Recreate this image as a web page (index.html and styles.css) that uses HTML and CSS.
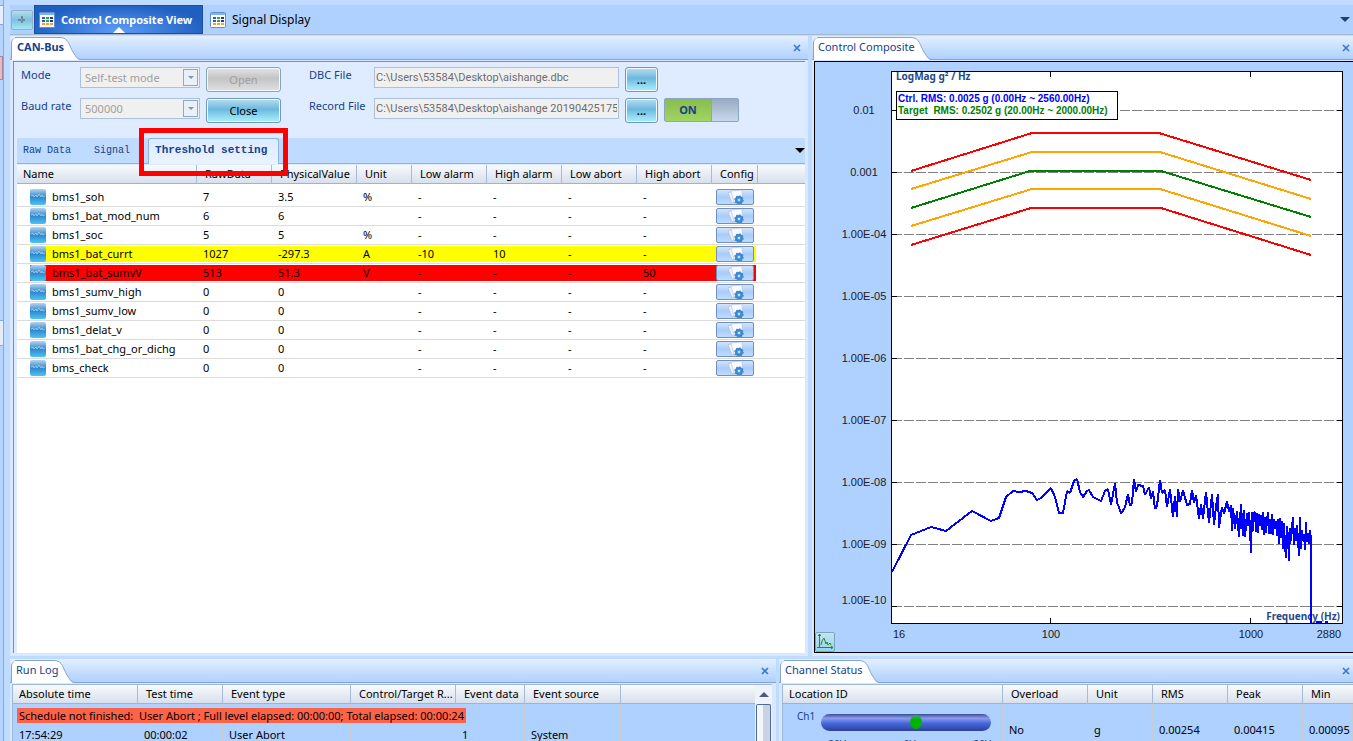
FILE: index.html
```
<!DOCTYPE html>
<html lang="en">
<head>
    <meta charset="UTF-8">
    <meta name="viewport" content="width=device-width, initial-scale=1.0">
    <title>Control Composite View</title>

    <link rel="stylesheet" href="styles.css">
</head>
<body>

    <!-- shared icons -->
    <svg class="sprites" aria-hidden="true">
        <defs>
            <linearGradient id="waveFill" x1="0" y1="0" x2="0" y2="1">
                <stop offset="0" stop-color="#b4d4ee"/>
                <stop offset="0.5" stop-color="#2f86cc"/>
                <stop offset="1" stop-color="#4cc4f4"/>
            </linearGradient>
        </defs>
        <symbol id="icon-wave" viewBox="0 0 16 16">
            <rect width="16" height="16" rx="2" fill="url(#waveFill)"/>
            <path d="M1 7l2-1 1 2 2-2 1 2 2-3 2 3 1-2 1 2 2-1" fill="none" stroke="#a4d0f0" stroke-width="0.8"/>
        </symbol>
        <symbol id="icon-config" viewBox="0 0 16 14">
            <path d="M0 3l5-2 4 10-5 2z" fill="#eef2fa" stroke="#a4b4d4" stroke-width="0.6"/>
            <path d="M3 1l11-1 1 12H6z" fill="#fafaff" stroke="#b4bedc" stroke-width="0.6"/>
            <circle cx="11" cy="10" r="3" fill="#5aa8ea" stroke="#3b86cf" stroke-width="2"/>
            <circle cx="11" cy="10" r="4" fill="none" stroke="#3b8cd8" stroke-width="1.5" stroke-dasharray="1.5 1.6"/>
            <circle cx="11" cy="10" r="1" fill="#e6f3ff"/>
        </symbol>
        <symbol id="icon-grid" viewBox="0 0 16 16">
            <rect x="0.5" y="0.5" width="15" height="15" rx="1" fill="#fff" stroke="#5f8fd0"/>
            <path d="M1 2h14" stroke="#7fb2ee" stroke-width="2"/>
            <path d="M3 6h3M3 9h3" stroke="#1f5fc0" stroke-width="2"/>
            <path d="M7 6h3M7 9h3" stroke="#3ba040" stroke-width="2"/>
            <path d="M11 6h3M11 9h3" stroke="#203a80" stroke-width="2"/>
            <path d="M3 12h3M7 12h3M11 12h3" stroke="#f0a030" stroke-width="2"/>
        </symbol>
        <symbol id="icon-close" viewBox="0 0 8 8">
            <path d="M1 1l6 6M7 1L1 7" fill="none" stroke="#2f78d8" stroke-width="1.6"/>
        </symbol>
        <symbol id="tab-slope" viewBox="0 0 22 23">
            <path d="M0 0C9 0 9 9 13 15S17 23 22 23H0z" fill="#fff"/>
            <path d="M0 .5C9 .5 9 9 13 15S17 22.500 22 22.500" fill="none" stroke="#86a4d0"/>
        </symbol>
    </svg>

    <div class="app">
        <aside class="rail">
            <span class="rail-box"></span>
            <span class="rail-red"></span>
            <span class="rail-low"></span>
        </aside>

        <div class="workspace">
            <nav class="views">
                <button class="add-view" type="button" aria-label="Add view">
                    <svg width="10" height="10" viewBox="0 0 10 10"><path d="M5 1v8M1 5h8" stroke="#6f8797" stroke-width="2" stroke-dasharray="3 1"/></svg>
                </button>
                <a href="#" class="view active"><svg class="icon"><use href="#icon-grid"/></svg>Control Composite View</a>
                <a href="#" class="view"><svg class="icon"><use href="#icon-grid"/></svg>Signal Display</a>
                <span class="arrow-down"></span>
            </nav>

            <main class="docks">
                <div class="dock-row dock-top">

                    <section class="panel">
                        <header class="panel-head">
                            <h2 class="panel-tab current"><span>CAN-Bus</span><svg class="slope"><use href="#tab-slope"/></svg></h2>
                            <button class="close" type="button" aria-label="Close CAN-Bus"><svg width="8" height="8"><use href="#icon-close"/></svg></button>
                        </header>
                        <div class="panel-body can-bus">
                            <form class="bus-form">
                                <label for="mode">Mode</label>
                                <div class="combo">
                                    <select id="mode" disabled><option>Self-test mode</option></select>
                                    <span class="combo-arrow"></span>
                                </div>
                                <button type="button" class="btn" disabled>Open</button>
                                <label for="dbc" class="file-label">DBC File</label>
                                <input type="text" id="dbc" value="C:\Users\53584\Desktop\aishange.dbc" disabled>
                                <button type="button" class="btn browse">...</button>

                                <label for="baud" class="row-start">Baud rate</label>
                                <div class="combo">
                                    <select id="baud" disabled><option>500000</option></select>
                                    <span class="combo-arrow"></span>
                                </div>
                                <button type="button" class="btn">Close</button>
                                <label for="record" class="file-label">Record File</label>
                                <input type="text" id="record" value="C:\Users\53584\Desktop\aishange 20190425175329" disabled>
                                <button type="button" class="btn browse">...</button>
                                <button type="button" class="switch" role="switch" aria-checked="true"><span>ON</span></button>
                            </form>

                            <nav class="subtabs">
                                <a href="#">Raw Data</a>
                                <a href="#">Signal</a>
                                <a href="#" class="selected">Threshold setting<span class="marker"></span></a>
                                <span class="arrow-down"></span>
                            </nav>

                            <div class="table-box">
                                <table class="signals">
                                    <colgroup>
                                        <col class="w180"><col class="w75"><col class="w85"><col class="w55"><col class="w75"><col class="w75"><col class="w75"><col class="w75"><col class="w46"><col>
                                    </colgroup>
                                    <thead>
                                        <tr><th>Name</th><th>RawData</th><th>PhysicalValue</th><th>Unit</th><th>Low alarm</th><th>High alarm</th><th>Low abort</th><th>High abort</th><th>Config</th><th></th></tr>
                                    </thead>
                                    <tbody>
                                        <tr><td><svg class="icon"><use href="#icon-wave"/></svg>bms1_soh</td><td>7</td><td>3.5</td><td>%</td><td>-</td><td>-</td><td>-</td><td>-</td><td><button class="config" aria-label="Config"><svg class="icon"><use href="#icon-config"/></svg></button></td><td></td></tr>
                                        <tr><td><svg class="icon"><use href="#icon-wave"/></svg>bms1_bat_mod_num</td><td>6</td><td>6</td><td></td><td>-</td><td>-</td><td>-</td><td>-</td><td><button class="config" aria-label="Config"><svg class="icon"><use href="#icon-config"/></svg></button></td><td></td></tr>
                                        <tr><td><svg class="icon"><use href="#icon-wave"/></svg>bms1_soc</td><td>5</td><td>5</td><td>%</td><td>-</td><td>-</td><td>-</td><td>-</td><td><button class="config" aria-label="Config"><svg class="icon"><use href="#icon-config"/></svg></button></td><td></td></tr>
                                        <tr class="alarm"><td><svg class="icon"><use href="#icon-wave"/></svg>bms1_bat_currt</td><td>1027</td><td>-297.3</td><td>A</td><td>-10</td><td>10</td><td>-</td><td>-</td><td><button class="config" aria-label="Config"><svg class="icon"><use href="#icon-config"/></svg></button></td><td></td></tr>
                                        <tr class="abort"><td><svg class="icon"><use href="#icon-wave"/></svg>bms1_bat_sumvV</td><td>513</td><td>51.3</td><td>V</td><td>-</td><td>-</td><td>-</td><td>50</td><td><button class="config" aria-label="Config"><svg class="icon"><use href="#icon-config"/></svg></button></td><td></td></tr>
                                        <tr><td><svg class="icon"><use href="#icon-wave"/></svg>bms1_sumv_high</td><td>0</td><td>0</td><td></td><td>-</td><td>-</td><td>-</td><td>-</td><td><button class="config" aria-label="Config"><svg class="icon"><use href="#icon-config"/></svg></button></td><td></td></tr>
                                        <tr><td><svg class="icon"><use href="#icon-wave"/></svg>bms1_sumv_low</td><td>0</td><td>0</td><td></td><td>-</td><td>-</td><td>-</td><td>-</td><td><button class="config" aria-label="Config"><svg class="icon"><use href="#icon-config"/></svg></button></td><td></td></tr>
                                        <tr><td><svg class="icon"><use href="#icon-wave"/></svg>bms1_delat_v</td><td>0</td><td>0</td><td></td><td>-</td><td>-</td><td>-</td><td>-</td><td><button class="config" aria-label="Config"><svg class="icon"><use href="#icon-config"/></svg></button></td><td></td></tr>
                                        <tr><td><svg class="icon"><use href="#icon-wave"/></svg>bms1_bat_chg_or_dichg</td><td>0</td><td>0</td><td></td><td>-</td><td>-</td><td>-</td><td>-</td><td><button class="config" aria-label="Config"><svg class="icon"><use href="#icon-config"/></svg></button></td><td></td></tr>
                                        <tr><td><svg class="icon"><use href="#icon-wave"/></svg>bms_check</td><td>0</td><td>0</td><td></td><td>-</td><td>-</td><td>-</td><td>-</td><td><button class="config" aria-label="Config"><svg class="icon"><use href="#icon-config"/></svg></button></td><td></td></tr>
                                    </tbody>
                                </table>
                            </div>
                        </div>
                    </section>

                    <section class="panel">
                        <header class="panel-head">
                            <h2 class="panel-tab"><span>Control Composite</span><svg class="slope"><use href="#tab-slope"/></svg></h2>
                            <button class="close" type="button" aria-label="Close Control Composite"><svg width="8" height="8"><use href="#icon-close"/></svg></button>
                        </header>
                        <div class="panel-body chart-body">
                            <svg class="chart" viewBox="815 62 538 590" preserveAspectRatio="xMinYMin meet">
                                <rect class="plot" x="891.5" y="71.5" width="451" height="552"/>

                                <path class="gridline" d="M892 110.500H1342M892 172.500H1342M892 234.500H1342M892 296.500H1342M892 358.500H1342M892 420.500H1342M892 482.500H1342M892 544.500H1342M892 606.500H1342"/>
                                <path class="tick" d="M892 110.500h5M892 172.500h5M892 234.500h5M892 296.500h5M892 358.500h5M892 420.500h5M892 482.500h5M892 544.500h5M892 606.500h5"/>
                                <path class="tick" d="M1337 110.500h5M1337 172.500h5M1337 234.500h5M1337 296.500h5M1337 358.500h5M1337 420.500h5M1337 482.500h5M1337 544.500h5M1337 606.500h5"/>
                                <path class="tick" d="M1050.500 72v5M1250.500 72v5M1050.500 618v5M1250.500 618v5"/>

                                <g class="axis middle">
                                    <text x="864" y="114">0.01</text>
                                    <text x="864" y="176">0.001</text>
                                    <text x="864" y="238">1.00E-04</text>
                                    <text x="864" y="300">1.00E-05</text>
                                    <text x="864" y="362">1.00E-06</text>
                                    <text x="864" y="424">1.00E-07</text>
                                    <text x="864" y="486">1.00E-08</text>
                                    <text x="864" y="548">1.00E-09</text>
                                    <text x="864" y="604">1.00E-10</text>
                                    <text x="899" y="638">16</text>
                                    <text x="1051" y="638">100</text>
                                    <text x="1251" y="638">1000</text>
                                    <text x="1329" y="638">2880</text>
                                </g>

                                <!-- abort / alarm limits around the target profile -->
                                <path class="limit-abort" d="M911 171L1032 133H1159L1311 180"/>
                                <path class="limit-alarm" d="M911 189L1032 152H1160L1311 199"/>
                                <path class="target" d="M911 208L1030 171H1161L1311 217"/>
                                <path class="limit-alarm" d="M911 226L1032 189H1160L1311 236"/>
                                <path class="limit-abort" d="M911 245L1031 208H1161L1311 255"/>

                                <text class="axis-title axis-end" x="1340" y="620">Frequency (Hz)</text>

                                <path class="control" d="M892 572L911 535L931 527L946 531L972 511L991 521L999 518L1006 497L1013 491L1019 492L1026 491L1032 493L1037 500L1041 498L1051 488L1055 497L1059 513L1063 513L1067 491L1070 493L1074 481L1077 479L1080 492L1083 497L1087 491L1089 490L1093 497L1097 499L1101 501L1105 491L1108 489L1111 505L1115 483L1117 503L1119 507L1121 514L1125 507L1128 494L1130 506L1132 503L1134 479L1136 492L1138 485L1143 486L1145 495L1149 487L1151 499L1153 491L1155 509L1157 506L1160 480L1162 493L1165 490L1167 507L1170 489L1173 517L1175 496L1177 517L1178 489L1180 502L1183 490L1187 505L1190 504L1192 490L1194 503L1196 495L1199 519L1201 504L1203 519L1206 492L1209 523L1212 494L1214 525L1216 506L1218 494L1219 528L1222 507L1224 514L1227 501L1229 512L1231 505L1232 531L1233 508L1235 529L1237 511L1239 537L1241 504L1242 522L1243 536L1244 510L1245 537L1247 513L1248 526L1249 512L1250 528L1251 553L1252 512L1253 531L1254 513L1255 512L1256 532L1257 513L1258 533L1259 514L1260 526L1261 515L1262 530L1263 512L1264 535L1265 517L1266 533L1267 520L1268 512L1269 534L1270 519L1271 534L1272 514L1273 535L1274 519L1275 529L1276 521L1277 536L1278 519L1279 544L1280 518L1281 538L1282 521L1283 549L1284 523L1285 545L1286 558L1287 526L1288 537L1289 561L1290 528L1291 541L1292 527L1293 517L1294 545L1295 528L1296 541L1297 525L1298 540L1299 556L1300 517L1301 549L1302 530L1303 541L1304 534L1305 550L1306 522L1307 542L1308 533L1309 544L1310 530L1311 540V623M1316 622H1322M1325 622H1328"/>

                                <text class="axis-title" x="896" y="80">LogMag g² / Hz</text>
                                <rect class="legend" x="896.5" y="91.5" width="221" height="28"/>
                                <text class="rms-control" x="898" y="102">Ctrl. RMS: 0.0025 g (0.00Hz ~ 2560.00Hz)</text>
                                <text class="rms-target" x="898" y="114">Target&nbsp; RMS: 0.2502 g (20.00Hz ~ 2000.00Hz)</text>
                            </svg>
                            <button class="chart-button" type="button" aria-label="Chart options">
                                <svg width="16" height="16" viewBox="0 0 16 16" fill="none" stroke="#23883c"><path d="M2.500 0v13.500H16M1 2l1.500-2L4 2M14 12l2 1.500-2 1.500M0 13.500h3"/><path d="M4 11l1-4 2-3 2 6 1-2 1 3 2-2 1 2"/></svg>
                            </button>
                        </div>
                    </section>
                </div>

                <div class="dock-row dock-bottom">
                    <section class="panel">
                        <header class="panel-head">
                            <h2 class="panel-tab"><span>Run Log</span><svg class="slope"><use href="#tab-slope"/></svg></h2>
                            <button class="close" type="button" aria-label="Close Run Log"><svg width="8" height="8"><use href="#icon-close"/></svg></button>
                        </header>
                        <div class="panel-body log-body">
                            <table class="log">
                                <colgroup>
                                    <col class="w125"><col class="w85"><col class="w128"><col class="w105"><col class="w69"><col class="w96"><col>
                                </colgroup>
                                <thead>
                                    <tr><th>Absolute time</th><th>Test time</th><th>Event type</th><th>Control/Target R...</th><th>Event data</th><th>Event source</th><th></th></tr>
                                </thead>
                                <tbody>
                                    <tr class="message"><td><span>Schedule not finished:&nbsp; User Abort ; Full level elapsed: 00:00:00; Total elapsed: 00:00:24</span></td><td></td><td></td><td></td><td></td><td></td><td></td></tr>
                                    <tr><td>17:54:29</td><td>00:00:02</td><td>User Abort</td><td></td><td>1</td><td>System</td><td></td></tr>
                                </tbody>
                            </table>
                            <div class="scrollbar"><span class="scroll-up"></span><span class="thumb"></span></div>
                        </div>
                    </section>

                    <section class="panel">
                        <header class="panel-head">
                            <h2 class="panel-tab"><span>Channel Status</span><svg class="slope"><use href="#tab-slope"/></svg></h2>
                            <button class="close" type="button" aria-label="Close Channel Status"><svg width="8" height="8"><use href="#icon-close"/></svg></button>
                        </header>
                        <div class="panel-body status-body">
                            <table class="status">
                                <colgroup>
                                    <col class="w220"><col class="w85"><col class="w65"><col class="w75"><col class="w75"><col>
                                </colgroup>
                                <thead>
                                    <tr><th>Location ID</th><th>Overload</th><th>Unit</th><th>RMS</th><th>Peak</th><th>Min</th></tr>
                                </thead>
                                <tbody>
                                    <tr>
                                        <td>
                                            <div class="channel">
                                                <span class="channel-name">Ch1</span>
                                                <div class="gauge">
                                                    <div class="gauge-bar"><span class="gauge-dot"></span></div>
                                                    <div class="gauge-scale"><span>-20V</span><span>0V</span><span>20V</span></div>
                                                </div>
                                            </div>
                                        </td>
                                        <td>No</td><td>g</td><td>0.00254</td><td>0.00415</td><td>0.00095</td>
                                    </tr>
                                </tbody>
                            </table>
                        </div>
                    </section>
                </div>
            </main>
        </div>
    </div>

</body>
</html>
```
FILE: styles.css
```
* {
    box-sizing: border-box;
}

body {
    margin: 0;
    background: #bfdbff;
    color: #000;
    font-family: "Noto Sans", "Open Sans", sans-serif;
    font-size: 11px;
    line-height: 16px;
}

button, input, select {
    font: inherit;
}

button {
    padding: 0;
}

a {
    color: inherit;
    text-decoration: none;
}

.sprites {
    position: absolute;
    width: 0;
    height: 0;
}

.icon {
    width: 16px;
    height: 16px;
    flex: none;
}

.app {
    display: flex;
    height: 100vh;
    overflow: hidden;
}

/* edge of the docked side bar */
.rail {
    display: flex;
    flex-direction: column;
    width: 4px;
    margin-right: 6px;
    padding-top: 5px;
    background: #b4d3ff;
    border-right: 1px solid #86a8dc;
}

.rail-box {
    height: 20px;
    background: #e4efff;
    border-top: 1px solid #86a8dc;
    border-bottom: 1px solid #86a8dc;
}

.rail-red {
    height: 24px;
    margin-top: 31px;
    background: #e8b8c4;
    border: 1px solid #a08898;
    border-left: 0;
}

.rail-low {
    height: 26px;
    margin-top: 240px;
    background: #e4ecf6;
    border-top: 1px solid #86a8dc;
    border-bottom: 1px solid #86a8dc;
}

.workspace {
    display: flex;
    flex-direction: column;
    flex: 1;
    min-width: 0;
    padding-top: 5px;
}

/* view tabs */
.views {
    display: flex;
    align-items: center;
    height: 30px;
    flex: none;
    background: #afd1ff;
    border-bottom: 1px solid #a4b8d0;
    font-size: 12px;
}

.add-view {
    display: grid;
    place-items: center;
    width: 22px;
    height: 20px;
    margin: 0 1px;
    border: 1px solid #8fb0c8;
    border-radius: 2px;
    background: linear-gradient(#b4dcec, #7cc0e0 50%, #a4e8f4);
}

.view {
    display: flex;
    align-items: center;
    gap: 6px;
    height: 29px;
    padding: 0 7px;
}

.view.active {
    position: relative;
    width: 169px;
    padding: 0 4px;
    border: 1px solid #1a4fa4;
    background: radial-gradient(ellipse at 50% 90%, #5a9cf6, #1f5fc0 75%);
    color: #fff;
    font-size: 11px;
    font-weight: bold;
    white-space: nowrap;
}

.view.active::after {
    content: "";
    position: absolute;
    left: 50%;
    bottom: 0;
    margin-left: -6px;
    border: 6px solid transparent;
    border-top: 0;
    border-bottom-color: #fff;
}

.arrow-down {
    margin-left: auto;
    border: 5px solid transparent;
    border-top-color: #000;
    border-bottom: 0;
}

.views .arrow-down {
    margin-right: 3px;
    border-top-color: #1f3f78;
}

/* docked panels */
.docks {
    display: grid;
    grid-template-rows: minmax(0, 620fr) minmax(0, 82fr);
    gap: 3px;
    flex: 1;
    min-height: 0;
    padding-top: 1px;
}

.dock-row {
    display: grid;
}

.dock-top {
    grid-template-columns: minmax(0, 798fr) minmax(0, 541fr);
    gap: 4px;
}

.dock-bottom {
    grid-template-columns: minmax(0, 766fr) minmax(0, 574fr);
    gap: 3px;
}

.panel {
    display: flex;
    flex-direction: column;
    min-height: 0;
    overflow: hidden;
    background: #dae8ff;
}

.panel-head {
    display: flex;
    align-items: center;
    height: 24px;
    flex: none;
    margin-bottom: 1px;
    padding-left: 1px;
    background: linear-gradient(#e3efff, #afd1ff);
    border-bottom: 1px solid #86a4d0;
}

.panel-tab {
    display: flex;
    height: 23px;
    margin: 0 0 -1px;
    align-self: flex-end;
    border-top: 1px solid transparent;
    background: linear-gradient(#86a4d0, #86a4d0) 4px 0 / calc(100% - 26px) 1px no-repeat border-box;
    font-size: 11px;
    font-weight: normal;
    color: #15428b;
}

.panel-tab.current {
    font-weight: bold;
}

/* the caption runs a little way over the slope */
.panel-tab span {
    z-index: 1;
    margin-right: -4px;
    padding: 1px 0 0 4px;
    background: linear-gradient(#fff, #fff) 0 0 / calc(100% - 3px) 100% no-repeat;
    border-left: 1px solid #86a4d0;
    border-radius: 5px 0 0 0;
    white-space: nowrap;
}

.panel-tab.current span {
    padding-left: 5px;
}

.slope {
    width: 22px;
    height: 23px;
    flex: none;
    margin-top: -1px;
}

.close {
    display: flex;
    margin: 0 7px 0 auto;
    border: 0;
    background: none;
}

.dock-row .panel:last-child .close {
    margin-right: 3px;
}

.panel-body {
    display: flex;
    flex: 1;
    min-height: 0;
}

/* CAN-Bus */
.can-bus {
    flex-direction: column;
    margin: 0 3px 3px;
    padding-left: 3px;
    border: solid #6b90d0;
    border-width: 1px 0 0 1px;
    background: #dfebff;
}

.bus-form {
    display: grid;
    grid-template-columns: 59px 120px 81px 93px 245px 39px 81px;
    grid-auto-rows: 25px;
    row-gap: 6px;
    height: 76px;
    flex: none;
    padding: 5px 0 0 4px;
    color: #15428b;
}

.row-start {
    grid-column: 1;
}

.bus-form .btn,
.switch {
    margin-left: 6px;
}

.file-label {
    padding-left: 28px;
}

.bus-form input,
.bus-form select {
    width: 100%;
    height: 21px;
    padding: 0 2px;
    border: 1px solid #abc1de;
    background: #f0f0f0;
    color: #6d6d6d;
}

.bus-form input {
    padding: 0 1px;
    font-family: Roboto, sans-serif;
}

.bus-form select {
    appearance: none;
    padding: 0 4px;
    color: #a0a0a0;
    opacity: 1;
}

.combo {
    position: relative;
}

.combo-arrow {
    display: grid;
    place-items: center;
    position: absolute;
    top: 2px;
    right: 2px;
    width: 15px;
    height: 17px;
    border: 1px solid #8aa8d4;
    background: #eaf0f8;
}

.combo-arrow::after {
    content: "";
    border: 3px solid transparent;
    border-top-color: #8a929c;
    border-bottom: 0;
}

.btn {
    height: 25px;
    border: 1px solid #7098b8;
    border-radius: 3px;
    background: linear-gradient(#b8deee, #6cb8e0 45%, #90d8f0 75%, #a8f0fc);
    box-shadow: inset 0 0 0 1px #f0faff;
    color: #000;
    font-size: 11px;
}

.btn:disabled {
    border-color: #8aa4b8;
    background: linear-gradient(#e4e4e4, #c4c4c4 45%, #e0e0e0);
    color: #a0a0a0;
}

.browse {
    font-weight: bold;
}

.switch {
    display: flex;
    height: 24px;
    border: 1px solid #88a4c8;
    border-radius: 2px;
    background: linear-gradient(#98aabf, #c8d8ec);
    color: #15428b;
    font-weight: bold;
}

.switch span {
    width: 47px;
    line-height: 22px;
    border-right: 1px solid #88a4c8;
    background: linear-gradient(#88bc4c, #a0d464);
}

.subtabs {
    display: flex;
    align-items: flex-end;
    height: 26px;
    flex: none;
    background: #bfdbff;
    border-bottom: 1px solid #8db2e3;
    color: #15428b;
    font-family: "Liberation Mono", monospace;
    font-size: 10px;
}

.subtabs a {
    padding: 0 17px 4px 6px;
}

.subtabs .selected {
    position: relative;
    height: 26px;
    margin: 0 0 -1px 1px;
    padding: 3px 11px 0 6px;
    border: 1px solid #8db2e3;
    border-bottom: 0;
    border-radius: 3px 3px 0 0;
    background: linear-gradient(#dcebff, #eaf3ff);
    font-size: 11px;
    font-weight: bold;
}

/* highlight drawn round the selected tab */
.marker {
    position: absolute;
    inset: -11px -10px -12px -10px;
    border: 5px solid #f00;
}

.subtabs .arrow-down {
    align-self: center;
}

.table-box {
    flex: 1;
    min-height: 0;
    overflow: hidden;
    background: #fff;
    border-top: 1px solid #dcebff;
}

/* tables */
table {
    width: 100%;
    border-collapse: separate;
    border-spacing: 0;
    table-layout: fixed;
}

th {
    height: 19px;
    padding: 0 0 0 8px;
    border-right: 1px solid #a4bcd8;
    border-bottom: 1px solid #9cb4d0;
    background: linear-gradient(#f8fafd, #d8e0ec);
    font-weight: normal;
    line-height: 18px;
    text-align: left;
    white-space: nowrap;
}

th:first-child {
    padding-left: 6px;
}

th:last-child {
    border-right: 0;
}

td {
    padding: 0 0 0 6px;
    white-space: nowrap;
}

.w46 { width: 46px; }
.w55 { width: 55px; }
.w65 { width: 65px; }
.w69 { width: 69px; }
.w75 { width: 75px; }
.w85 { width: 85px; }
.w96 { width: 96px; }
.w105 { width: 105px; }
.w125 { width: 125px; }
.w128 { width: 128px; }
.w180 { width: 180px; }
.w220 { width: 220px; }

.signals tbody::before {
    content: "";
    display: block;
    height: 4px;
}

.signals td {
    height: 19px;
    border-bottom: 1px solid #dcdcdc;
    line-height: 18px;
}

.signals td:first-child {
    padding-left: 13px;
}

.signals td .icon {
    margin: 1px 6px 0 0;
    vertical-align: top;
}

.signals td:nth-child(9) {
    padding-left: 4px;
}

.alarm {
    background: linear-gradient(#ff0, #ff0) 13px 1px / 726px 16px no-repeat;
}

.abort {
    background: linear-gradient(#f00, #f00) 13px 1px / 726px 16px no-repeat;
}

.config {
    display: grid;
    place-items: center;
    width: 38px;
    height: 16px;
    border: 1px solid #7090c0;
    border-radius: 2px;
    background: linear-gradient(#d4e4fa, #a8ccfa 50%, #c0dcff);
}

.signals .config .icon {
    width: 16px;
    height: 14px;
    margin: 0 0 0 2px;
}

/* chart */
.chart-body {
    position: relative;
    margin: 0 0 3px 2px;
    border: 1px solid #000;
    border-right: 0;
    background: #afd1ff;
}

.chart {
    display: block;
    width: 100%;
    height: 100%;
    font-family: "Liberation Sans", Arial, sans-serif;
    font-size: 11px;
}

.plot {
    fill: #fff;
    stroke: #000;
}

.gridline {
    stroke: #808080;
    stroke-dasharray: 10 2;
}

.tick {
    stroke: #000;
}

.axis {
    fill: #202020;
}

.middle {
    text-anchor: middle;
}

.axis-title {
    fill: #1f4a8a;
    font-family: "Noto Sans", sans-serif;
    font-size: 10px;
    font-weight: bold;
}

.axis-end {
    text-anchor: end;
}

.limit-abort,
.limit-alarm,
.target,
.control {
    fill: none;
    stroke-width: 2;
    shape-rendering: crispEdges;
}

.limit-abort { stroke: #f00; }
.limit-alarm { stroke: #ffa500; }
.target { stroke: #008000; }

.control {
    stroke: #00f;
    stroke-linejoin: bevel;
}

.legend {
    fill: #fff;
    stroke: #000;
}

.rms-control,
.rms-target {
    font-size: 10px;
    font-weight: bold;
}

.rms-control { fill: #00f; }
.rms-target { fill: #008000; }

.chart-button {
    position: absolute;
    left: 0;
    bottom: 0;
    display: grid;
    place-items: center;
    width: 20px;
    height: 20px;
    border: 1px solid #7ba4c0;
    border-radius: 2px;
    background: linear-gradient(#c4e4f0, #98d4e8);
}

/* run log */
.log-body {
    margin: 0 4px 0 2px;
    border: solid #9cb8dc;
    border-width: 1px 0 0 1px;
    background: #afd1ff;
}

.log {
    flex: 1;
    align-self: flex-start;
}

.log td {
    height: 22px;
    border-right: 1px solid #c8ccd0;
    border-bottom: 1px solid #c8ccd0;
    line-height: 16px;
}

.log td:last-child {
    border-right: 0;
}

.log .message td {
    padding: 4px 0 0 4px;
    vertical-align: top;
}

.message span {
    position: relative;
    display: inline-block;
    padding: 0 2px;
    background: #ff6347;
    line-height: 15px;
}

.log tr:last-child td {
    height: 19px;
}

.scrollbar {
    display: flex;
    flex-direction: column;
    align-items: center;
    width: 17px;
    background: #f0f4fa;
}

.scroll-up {
    margin: 7px 0;
    border: 5px solid transparent;
    border-bottom-color: #4a5a88;
    border-top: 0;
}

.thumb {
    width: 15px;
    flex: 1;
    border: 1px solid #50689c;
    border-bottom: 0;
    border-radius: 2px 2px 0 0;
    background: linear-gradient(90deg, #f4f6fa 50%, #c8d4e4 50%);
}

/* channel status */
.status-body {
    margin-left: 3px;
    border: solid #9cb8dc;
    border-width: 1px 0 0 1px;
    background: #afd1ff;
    align-items: flex-start;
}

.status td {
    height: 52px;
    border-right: 1px solid #c8ccd0;
}

.channel {
    display: flex;
    gap: 10px;
    height: 44px;
    padding-left: 8px;
}

.channel-name {
    width: 14px;
    color: #15428b;
    font-size: 10px;
}

.gauge {
    width: 170px;
    padding-top: 6px;
}

.gauge-bar {
    display: flex;
    justify-content: center;
    height: 17px;
    border-radius: 9px;
    background: linear-gradient(#3c4c94, #8c9cec 25%, #4468e0 55%, #2c4098);
}

.gauge-dot {
    width: 12px;
    height: 14px;
    margin: 1px 0 0 20px;
    border-radius: 50%;
    background: linear-gradient(#40a070, #00b400 40%);
}

.gauge-scale {
    display: flex;
    justify-content: space-between;
    margin-top: 5px;
    padding: 0 0 0 4px;
    color: #15428b;
    font-size: 10px;
}
```
